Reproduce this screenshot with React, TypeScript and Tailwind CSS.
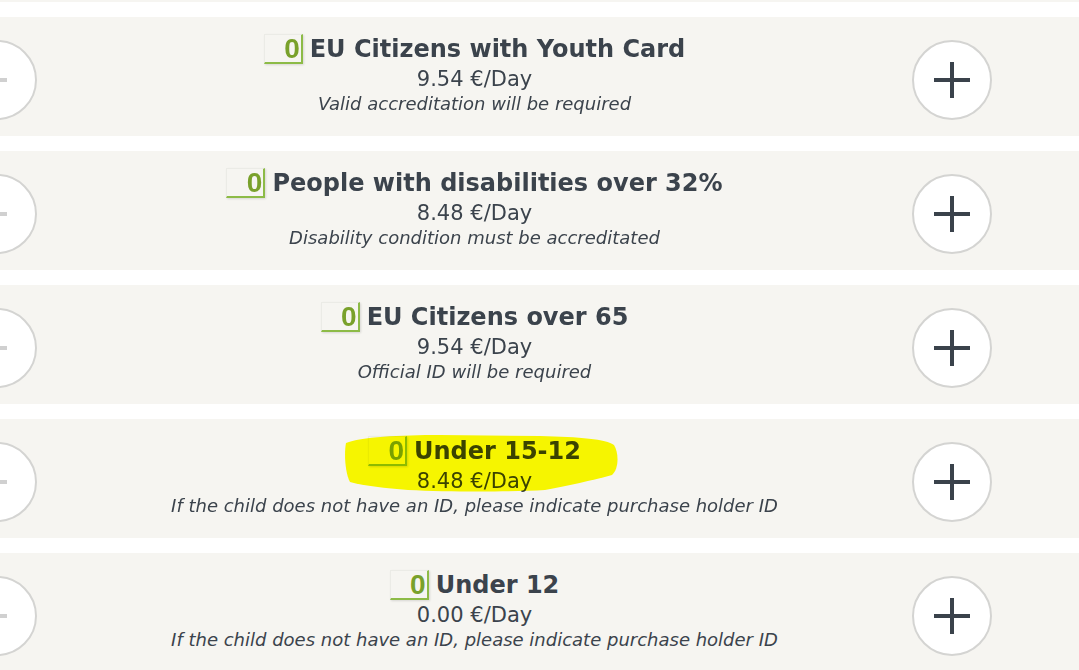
const tickets = [
  { name: 'EU Citizens with Youth Card', price: '9.54', note: 'Valid accreditation will be required' },
  { name: 'People with disabilities over 32%', price: '8.48', note: 'Disability condition must be accreditated' },
  { name: 'EU Citizens over 65', price: '9.54', note: 'Official ID will be required' },
  { name: 'Under 15-12', price: '8.48', note: 'If the child does not have an ID, please indicate purchase holder ID', marked: true },
  { name: 'Under 12', price: '0.00', note: 'If the child does not have an ID, please indicate purchase holder ID' },
];

type Ticket = { name: string; price: string; note: string; marked?: boolean };

const Highlight = () => (
  <svg
    className="pointer-events-none absolute left-[340px] top-[14px] mix-blend-multiply"
    width="282"
    height="62"
    viewBox="0 0 282 62"
  >
    <path
      d="M6 10 C 20 4, 60 2, 100 2 L 200 3 C 240 4, 266 6, 274 12 C 279 20, 279 36, 272 42 C 250 48, 230 52, 205 57 C 170 59, 110 59, 68 57 C 45 55, 25 53, 10 49 C 5 40, 4 20, 6 10 Z"
      fill="#ffff00"
    />
  </svg>
);

const TicketRow = ({ ticket }: { ticket: Ticket }) => (
  <div className="relative flex h-[119px] items-start bg-[#f6f5f1]">
    <button className="ml-[-43px] mt-[23px] flex size-20 shrink-0 items-center justify-center rounded-full border-2 border-[#d4d4d2] bg-white">
      <span className="ml-[-4px] block h-1 w-[24px] bg-[#d0d0d0]" />
    </button>

    <div className="flex-1 pt-[15px] text-center text-[#3b434c]">
      <div className="flex h-[34px] items-center justify-center">
        <span className="mr-[7px] flex h-[30px] w-[39px] items-center justify-end border border-b-2 border-r-2 border-t-[#ebebe6] border-l-[#ebebe6] border-b-[#8dbb47] border-r-[#8dbb47] bg-[#f6f5f1] pr-[1px] font-['Liberation_Sans',sans-serif] text-[28px] font-bold leading-none text-[#79a12b] shadow-[1px_1px_2px_rgba(0,0,0,0.12)]">
          0
        </span>
        <span className="font-['DejaVu_Sans',sans-serif] text-[24px] font-bold leading-[34px]">{ticket.name}</span>
      </div>
      <div className="font-['DejaVu_Sans',sans-serif] text-[21px] leading-[26px]">{ticket.price} €/Day</div>
      <div className="font-['DejaVu_Sans',sans-serif] text-[18px] italic leading-[24px]">{ticket.note}</div>
    </div>

    <button className="mr-[87px] mt-[23px] flex size-20 shrink-0 items-center justify-center rounded-full border-2 border-[#d4d4d2] bg-white">
      <svg width="36" height="36" viewBox="0 0 36 36">
        <rect x="0" y="16" width="36" height="4" fill="#3a424b" />
        <rect x="16" y="0" width="4" height="36" fill="#3a424b" />
      </svg>
    </button>

    {ticket.marked && <Highlight />}
  </div>
);

export default function App() {
  return (
    <div className="h-[670px] w-[1079px] overflow-hidden bg-white">
      <div className="h-[2px] bg-[#f6f5f1]" />
      <div className="mt-[15px] flex flex-col gap-[15px]">
        {tickets.map((t) => (
          <TicketRow key={t.name} ticket={t} />
        ))}
      </div>
    </div>
  );
}
